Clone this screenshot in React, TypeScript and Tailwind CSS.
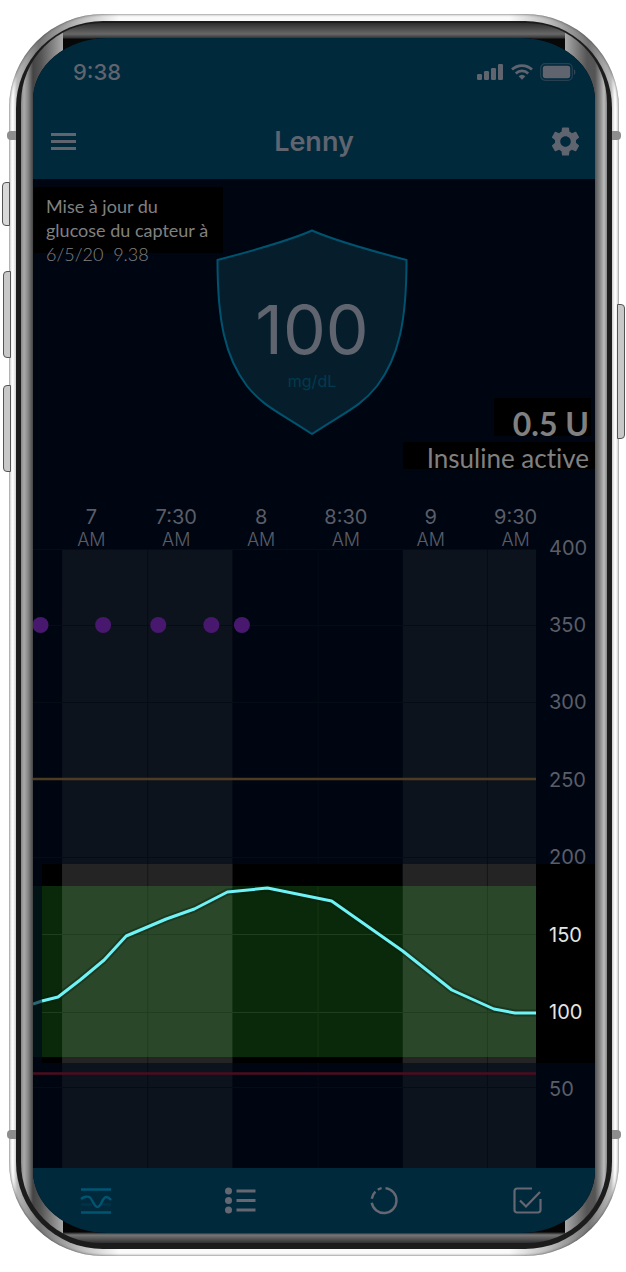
import { MdSettings } from "react-icons/md";

const times = ["7", "7:30", "8", "8:30", "9", "9:30"];

const levels = [400, 350, 300, 250, 200, 150, 100, 50];

const glucose =
  "9,452 25,448 47,431 71,411 93,387 133,370 161,360 194,343 234,339 298,352 369,402 418,441 460,460 481,464 502,464";

function SignalIcon() {
  return (
    <svg viewBox="0 0 27 16" className="w-[27px] h-4" fill="currentColor" aria-hidden="true">
      <rect x="0" y="10" width="5" height="6" rx="1.2" />
      <rect x="7" y="7" width="5" height="9" rx="1.2" />
      <rect x="14" y="4" width="5" height="12" rx="1.2" />
      <rect x="21" y="0" width="5" height="16" rx="1.2" />
    </svg>
  );
}

function WifiIcon() {
  return (
    <svg viewBox="0 0 22 16" className="w-[22px] h-4" aria-hidden="true">
      <g fill="none" stroke="currentColor" strokeWidth="2.8">
        <path d="M1 5.6a14.4 14.4 0 0 1 20 0" />
        <path d="M4.8 9.4a9 9 0 0 1 12.4 0" />
      </g>
      <path d="M7.6 12.3a5 5 0 0 1 6.8 0L11 15.8z" fill="currentColor" />
    </svg>
  );
}

function BatteryIcon() {
  return (
    <svg viewBox="0 0 36 18" className="w-9 h-[18px]" aria-hidden="true">
      <rect x="0.7" y="0.7" width="31.6" height="16.6" rx="4.5" fill="none" stroke="currentColor" strokeOpacity="0.4" strokeWidth="1.2" />
      <rect x="2.8" y="2.8" width="27.4" height="12.4" rx="2.6" fill="currentColor" />
      <path d="M34 6.2c1.8.8 1.8 4.8 0 5.6z" fill="currentColor" fillOpacity="0.5" />
    </svg>
  );
}

function MenuIcon() {
  return (
    <svg viewBox="0 0 25 18" className="w-[25px] h-[18px]" fill="currentColor" aria-hidden="true">
      <rect y="0" width="25" height="3" />
      <rect y="7" width="25" height="3" />
      <rect y="14" width="25" height="3" />
    </svg>
  );
}

function TrendIcon() {
  return (
    <svg viewBox="0 0 32 32" className="size-8" fill="none" stroke="currentColor" strokeWidth="2.4" aria-hidden="true">
      <path d="M1 5.500h30M1 28.500h30" />
      <path d="M1 20.500h11M20 20.500h11" strokeOpacity="0.25" />
      <path d="M1 15c3-2.500 7-3 9-1.500 3 3 4 9.500 7.500 9.500s4-7 7.500-9.500c2-1.500 4 0 6 2.500" />
    </svg>
  );
}

function ListIcon() {
  return (
    <svg viewBox="0 0 32 32" className="size-8" fill="currentColor" aria-hidden="true">
      <circle cx="4.500" cy="7" r="3.500" />
      <circle cx="4.500" cy="16.500" r="3.500" />
      <circle cx="4.500" cy="26" r="3.500" />
      <path d="M12.500 5.500h19v3h-19zM12.500 15h19v3h-19zM12.500 24.500h19v3h-19z" />
    </svg>
  );
}

function RingIcon() {
  return (
    <svg viewBox="0 0 32 32" className="size-8" fill="none" stroke="currentColor" strokeWidth="2.4" aria-hidden="true">
      <path d="M17.500 4.100A12.500 12.500 0 1 1 3.700 18.800" />
      <path d="M3.800 14.700a12.500 12.500 0 0 1 3.600-7" />
      <path d="M9.800 5.700a12.500 12.500 0 0 1 3.800-1.500" />
    </svg>
  );
}

function CheckIcon() {
  return (
    <svg viewBox="0 0 32 32" className="size-8" fill="none" stroke="currentColor" strokeWidth="2.2" aria-hidden="true">
      <path d="M20 4.500H5a2.500 2.500 0 0 0-2.500 2.500v19A2.500 2.500 0 0 0 5 28.500h21a2.500 2.500 0 0 0 2.500-2.500V15" />
      <path d="M8 16.500l6 6L28 8" />
    </svg>
  );
}

const tabs = [
  { icon: TrendIcon, label: "Tendance", color: "text-[#005573]" },
  { icon: ListIcon, label: "Historique", color: "text-[#656872]" },
  { icon: RingIcon, label: "Temps dans la cible", color: "text-[#656872]" },
  { icon: CheckIcon, label: "Notifications", color: "text-[#656872]" },
];

function Header() {
  return (
    <header className="bg-[#00293c] text-[#5f646f]">
      <div className="h-[66px] pt-0.5 pl-10 pr-[19px] flex items-center justify-between">
        <span className="text-[22px] leading-7 font-medium">9:38</span>
        <div className="flex items-center gap-[7px]">
          <SignalIcon />
          <WifiIcon />
          <BatteryIcon />
        </div>
      </div>
      <div className="h-[75px] px-3 grid grid-cols-[1fr_auto_1fr] items-center">
        <button type="button" aria-label="Menu" className="justify-self-start p-1.5">
          <MenuIcon />
        </button>
        <h1 className="text-[27px] leading-8 font-semibold">Lenny</h1>
        <button type="button" aria-label="Réglages" className="justify-self-end">
          <MdSettings className="size-[35px]" />
        </button>
      </div>
    </header>
  );
}

function Summary() {
  return (
    <section className="h-[326px] grid">
      <div className="col-start-1 row-start-1 self-start justify-self-start mt-2 ml-px w-[189px] h-[66px] pt-[7px] pl-3 bg-black font-[Lato,sans-serif] text-[18px] leading-6 text-[#808080] whitespace-nowrap">
        <p>Mise à jour du</p>
        <p>glucose du capteur à</p>
        <p className="font-light">6/5/20&nbsp; 9.38</p>
      </div>

      <div className="col-start-1 row-start-1 self-start justify-self-center mt-[50px] mr-1 grid">
        <svg viewBox="0 0 192 206" className="col-start-1 row-start-1 w-[192px] h-[206px]" aria-hidden="true">
          <path
            d="M96 1.500Q70 13 1.500 31C1.500 92 9 128 31 157C47 177 61 182 96 205C131 182 145 177 161 157C183 128 190.500 92 190.500 31Q122 13 96 1.500Z"
            fill="#061e2c"
            stroke="#00536f"
            strokeWidth="2"
          />
        </svg>
        <div className="col-start-1 row-start-1 pt-16 text-center">
          <p className="text-[68px] leading-[72px] text-[#5f646f]">100</p>
          <p className="mt-1 text-[16px] leading-6 text-[#003b50]">mg/dL</p>
        </div>
      </div>

      <div className="col-start-1 row-start-1 self-end justify-self-end mb-9 flex flex-col items-end gap-1.5 font-[Lato,sans-serif] text-[#808080]">
        <p className="mr-1 w-[97px] h-[38px] pr-0.5 pt-2 bg-black text-right text-[32px] leading-9 font-bold">0.5 U</p>
        <p className="w-48 h-[27px] pr-1.5 pt-0.5 bg-black text-right text-[26px] leading-7 whitespace-nowrap [font-variant-ligatures:none]">
          Insuline active
        </p>
      </div>
    </section>
  );
}

function GlucoseChart() {
  return (
    <section className="grid grid-cols-[1fr_59px] text-[#5a5d68]">
      <div>
        <div className="h-11 ml-4 -mr-[22px] grid grid-cols-6 text-center">
          {times.map((time) => (
            <div key={time}>
              <p className="text-[20px] leading-6">{time}</p>
              <p className="text-[18px] leading-[22px] font-light">AM</p>
            </div>
          ))}
        </div>

        <svg viewBox="0 0 502 619" preserveAspectRatio="none" className="block w-full h-[619px]" role="img" aria-label="Glucose">
          <rect x="9" y="315" width="493" height="199" fill="#000000" />
          {/* hour bands */}
          <rect x="29" width="170" height="619" fill="#0d131d" />
          <rect x="369" width="133" height="619" fill="#0d131d" />
          <rect x="29" y="315" width="170" height="199" fill="#242424" />
          <rect x="369" y="315" width="133" height="199" fill="#242424" />
          {/* target range */}
          <rect y="337" width="9" height="171" fill="#021316" />
          <rect x="9" y="337" width="493" height="171" fill="#0a290a" />
          <rect x="29" y="337" width="170" height="171" fill="#2b4729" />
          <rect x="369" y="337" width="133" height="171" fill="#2b4729" />
          <g stroke="#060c16" strokeWidth="1">
            <path d="M0 .5h502M0 76.500h502M0 153.500h502M0 308.500h502M0 538.500h502" />
            <path d="M114.500 0v315M284.500 0v315M453.500 0v315M114.500 514v105M284.500 514v105M453.500 514v105" />
          </g>
          <path d="M114.500 315v22M453.500 315v22M114.500 508v6M453.500 508v6" stroke="#161616" />
          <path d="M9 385.500h493M9 463.500h493M114.500 337v171M453.500 337v171" stroke="#1f3d1f" />
          <path d="M284.500 337v171" stroke="#153615" />
          <path d="M0 230h502" stroke="#4d3c22" strokeWidth="2.500" />
          <path d="M0 524.500h502" stroke="#4d0c1c" strokeWidth="2.500" />
          <g fill="#47186d">
            <circle cx="7.500" cy="76" r="8" />
            <circle cx="70" cy="76" r="8" />
            <circle cx="125" cy="76" r="8" />
            <circle cx="178" cy="76" r="8" />
            <circle cx="208.500" cy="76" r="8" />
          </g>
          <polyline points={glucose} fill="none" stroke="#001a10" strokeOpacity="0.350" strokeWidth="7" />
          <path d="M0 455l9-3" stroke="#2c6672" strokeWidth="3" />
          <polyline points={glucose} fill="none" stroke="#6ff3f5" strokeWidth="3" strokeLinejoin="round" />
        </svg>
      </div>

      <div className="pt-1 pb-10 pl-[13px] flex flex-col text-[20px] leading-6 bg-[linear-gradient(to_bottom,transparent_359px,#000_359px,#000_558px,transparent_558px)]">
        {levels.map((level) => (
          <div
            key={level}
            className={
              level === 150 || level === 100
                ? "flex-1 flex items-center text-[#e4e4e4]"
                : "flex-1 flex items-center"
            }
          >
            {level}
          </div>
        ))}
      </div>
    </section>
  );
}

function TabBar() {
  return (
    <nav className="h-[65px] pl-[47px] pr-[51px] pt-4 flex items-start justify-between bg-[#00293c]">
      {tabs.map(({ icon: Icon, label, color }) => (
        <button key={label} type="button" aria-label={label} className={color}>
          <Icon />
        </button>
      ))}
    </nav>
  );
}

// side keys and antenna bands sit on the outside of the shell
function Keys() {
  return (
    <div aria-hidden="true">
      <i className="absolute -left-[7px] top-[168px] w-2 h-11 rounded-l-sm border border-[#555] bg-[#d8d8d8]" />
      <i className="absolute -left-1.5 top-[257px] w-2 h-[87px] rounded-l-sm border border-[#555] bg-[#c8c8c8]" />
      <i className="absolute -left-1.5 top-[371px] w-2 h-[87px] rounded-l-sm border border-[#555] bg-[#c8c8c8]" />
      <i className="absolute -right-1.5 top-[290px] w-2 h-[135px] rounded-r-sm border border-[#555] bg-[#c8c8c8]" />
      <i className="absolute -left-0.5 top-[117px] w-[9px] h-[9px] rounded-l-sm bg-[#8d8d8d]" />
      <i className="absolute -right-0.5 top-[117px] w-[9px] h-[9px] rounded-r-sm bg-[#8d8d8d]" />
      <i className="absolute -left-0.5 bottom-[117px] w-[9px] h-[9px] rounded-l-sm bg-[#8d8d8d]" />
      <i className="absolute -right-0.5 bottom-[117px] w-[9px] h-[9px] rounded-r-sm bg-[#8d8d8d]" />
    </div>
  );
}

export default function App() {
  return (
    <div className="min-h-screen bg-white pl-[9px] pr-[7px] pt-3.5 pb-4 font-[Inter,sans-serif]">
      <div className="relative rounded-[94px] p-[7px] shadow-[inset_0_0_3px_#444] bg-[linear-gradient(to_right,#eee_0,#fff_4px,#bbb_8px,#777_30px,#bbb_70px,#fafafa_110px,#fafafa_calc(100%-110px),#bbb_calc(100%-70px),#777_calc(100%-30px),#bbb_calc(100%-8px),#fff_calc(100%-4px),#eee_100%)]">
        <Keys />
        <div className="relative rounded-[87px] px-[5px] pt-0.5 pb-1.5 bg-[#1c1c1c]">
          <div className="rounded-[80px] px-3 pt-[15px] pb-2.5 bg-[linear-gradient(to_bottom,#2e2e2e,#686868_11px,#333_15px,#080808_16px,#080808),linear-gradient(to_top,#303030,#777_8px,#303030_10px,#050505_11px,#050505),linear-gradient(to_right,#888_0,#aaa_3px,#888_7px,#444_12px,#555_20px,#aaa_42px,#aaa_calc(100%-42px),#555_calc(100%-20px),#555_calc(100%-12px),#888_calc(100%-7px),#bbb_calc(100%-3px),#888)] bg-[size:calc(100%-84px)_27px,calc(100%-84px)_22px,100%_100%] bg-[position:center_top,center_bottom,center] bg-no-repeat">
            <div className="overflow-hidden rounded-[74px/62px] bg-[#000611]">
              <Header />
              <main>
                <Summary />
                <GlucoseChart />
              </main>
              <TabBar />
            </div>
          </div>
        </div>
      </div>
    </div>
  );
}
